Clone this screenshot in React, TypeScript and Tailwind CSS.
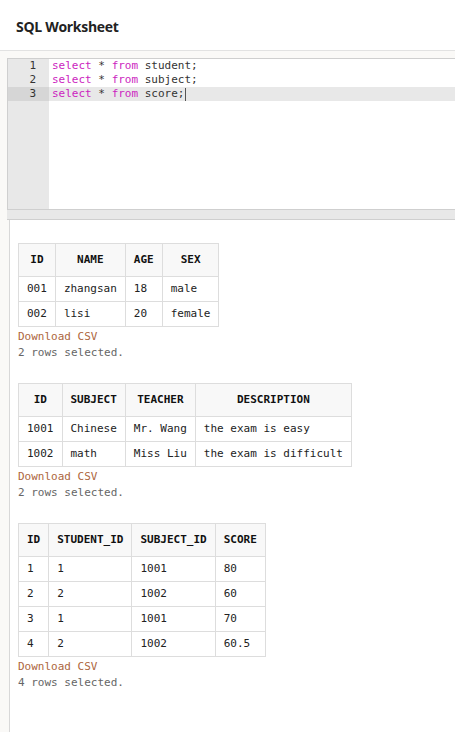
import React from 'react';

const MONO = "font-['DejaVu_Sans_Mono',monospace]";

type Table = { cols: string[]; rows: string[][]; total: number };

const tables: Table[] = [
  {
    cols: ['ID', 'NAME', 'AGE', 'SEX'],
    rows: [
      ['001', 'zhangsan', '18', 'male'],
      ['002', 'lisi', '20', 'female'],
    ],
    total: 2,
  },
  {
    cols: ['ID', 'SUBJECT', 'TEACHER', 'DESCRIPTION'],
    rows: [
      ['1001', 'Chinese', 'Mr. Wang', 'the exam is easy'],
      ['1002', 'math', 'Miss Liu', 'the exam is difficult'],
    ],
    total: 2,
  },
  {
    cols: ['ID', 'STUDENT_ID', 'SUBJECT_ID', 'SCORE'],
    rows: [
      ['1', '1', '1001', '80'],
      ['2', '2', '1002', '60'],
      ['3', '1', '1001', '70'],
      ['4', '2', '1002', '60.5'],
    ],
    total: 4,
  },
];

const lines = ['student', 'subject', 'score'];

const ResultTable: React.FC<{ t: Table }> = ({ t }) => (
  <div className="mb-[22px]">
    <table className={`${MONO} border-collapse text-[11px] text-[#222]`}>
      <thead>
        <tr>
          {t.cols.map(c => (
            <th key={c} className="h-[33px] border border-[#ddd] bg-[#f8f8f8] px-2 text-center font-bold text-[#111]">
              {c}
            </th>
          ))}
        </tr>
      </thead>
      <tbody>
        {t.rows.map((r, i) => (
          <tr key={i}>
            {r.map((v, j) => (
              <td key={j} className="h-[25px] whitespace-nowrap border border-[#ddd] px-2 text-left">
                {v}
              </td>
            ))}
          </tr>
        ))}
      </tbody>
    </table>
    <div className={`${MONO} mt-[2px] text-[11px] leading-[16px]`}>
      <div className="text-[#ad6640]">Download CSV</div>
      <div className="text-[#666]">{t.total} rows selected.</div>
    </div>
  </div>
);

export default function App() {
  return (
    <div className="min-h-[732px] bg-[#faf9f7] font-['Open_Sans',sans-serif]">
      <div className="flex h-[51px] items-center border-b border-[#e2e2e2] bg-white pl-4 pt-[2px]">
        <h1 className="text-[14px] font-bold tracking-[-0.3px] text-[#222]">SQL Worksheet</h1>
      </div>

      <div className="pl-[7px] pt-[7px]">
        {/* editor */}
        <div className="flex h-[151px] border-t border-l border-[#cfcfcf] bg-white">
          <div className="w-[41px] shrink-0 bg-[#e8e8e8]">
            {lines.map((_, i) => (
              <div
                key={i}
                className={`${MONO} h-[14px] pr-[13px] text-right text-[11px] leading-[14px] text-[#333] ${i === 2 ? 'bg-[#d6d6d6]' : ''}`}
              >
                {i + 1}
              </div>
            ))}
          </div>
          <div className="flex-1">
            {lines.map((name, i) => (
              <div
                key={name}
                className={`${MONO} h-[14px] whitespace-pre pl-[3px] text-[11px] leading-[14px] text-[#333] ${i === 2 ? 'bg-[#e8e8e8]' : ''}`}
              >
                <span className="text-[#cc1fc0]">select</span>
                {' * '}
                <span className="text-[#cc1fc0]">from</span>
                {' ' + name + ';'}
                {i === 2 && <span className="ml-[1px] inline-block h-[13px] w-px bg-[#555] align-middle" />}
              </div>
            ))}
          </div>
        </div>
        {/* resize bar */}
        <div className="h-[11px] border-y border-[#cfcfcf] bg-[#e8e8e8]" />
        {/* results */}
        <div className="ml-[2px] min-h-[520px] border-l border-[#d8d8d8] bg-white pl-2 pt-[23px]">
          {tables.map((t, i) => (
            <ResultTable key={i} t={t} />
          ))}
        </div>
      </div>
    </div>
  );
}
